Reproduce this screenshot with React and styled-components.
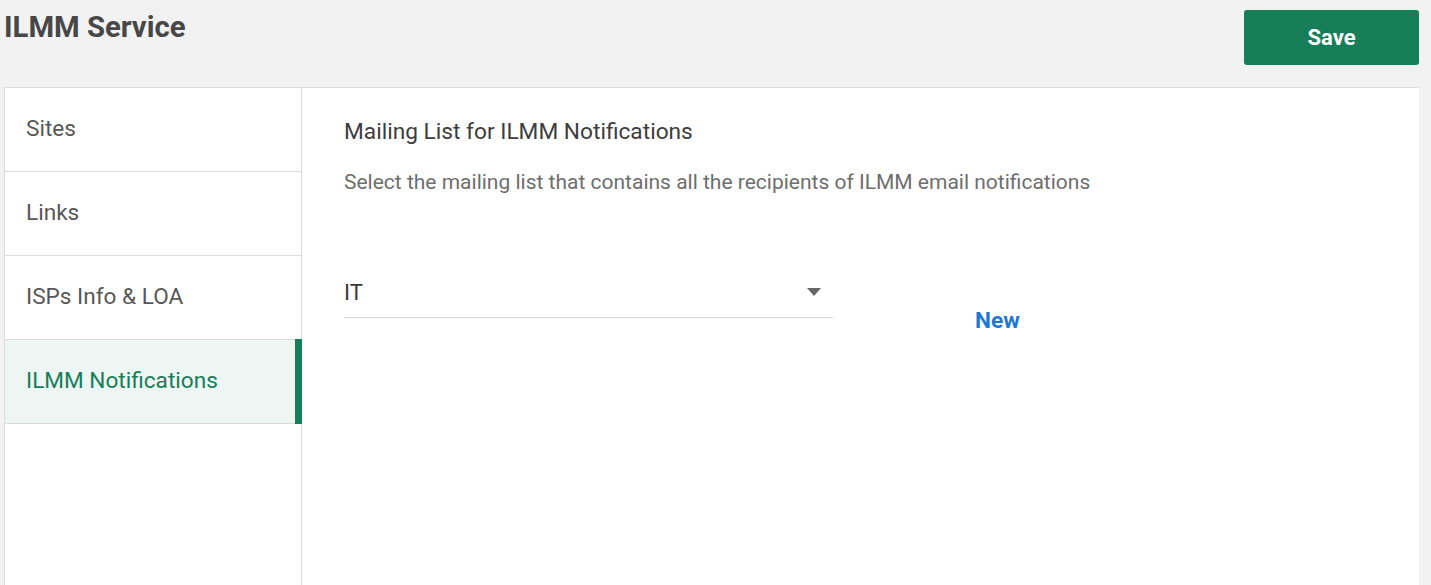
import React, { useState } from "react"
import styled, { createGlobalStyle } from "styled-components"

const GREEN = "#177e5a"

const GlobalStyle = createGlobalStyle`
	html, body {
		margin: 0;
		padding: 0;
		background: #f2f2f2;
		font-family: Roboto, "Liberation Sans", sans-serif;
	}
`

const Page = styled.div`
	min-height: 585px;
	display: flex;
	flex-direction: column;
	padding: 0 12px 0 4px;
	box-sizing: border-box;
`

const Header = styled.div`
	display: flex;
	justify-content: space-between;
	align-items: flex-start;
	height: 87px;
`

const Title = styled.h1`
	margin: 8px 0 0;
	font-size: 29.3px;
	line-height: 38px;
	font-weight: 700;
	color: #474747;
`

const SaveButton = styled.button`
	margin-top: 10px;
	width: 175px;
	height: 55px;
	border: none;
	border-radius: 3px;
	background: ${ GREEN };
	color: #fff;
	font-family: inherit;
	font-size: 22px;
	font-weight: 700;
	cursor: pointer;
`

const Panel = styled.div`
	flex: 1;
	display: flex;
	background: #fff;
	border-top: 1px solid #dcdcdc;
	border-left: 1px solid #dcdcdc;
`

const Sidebar = styled.nav`
	width: 296px;
	display: flex;
	flex-direction: column;
	border-right: 1px solid #dcdcdc;
`

const NavItem = styled.div`
	position: relative;
	height: 84px;
	box-sizing: border-box;
	display: flex;
	align-items: center;
	padding: 0 0 3px 21px;
	border-bottom: 1px solid #dcdcdc;
	font-size: 22.6px;
	color: ${ p => p.$active ? GREEN : "#585858" };
	background: ${ p => p.$active ? "#eef6f3" : "#fff" };
	cursor: pointer;

	&::after {
		content: "";
		display: ${ p => p.$active ? "block" : "none" };
		position: absolute;
		top: -1px;
		bottom: -1px;
		right: -1px;
		width: 7px;
		background: ${ GREEN };
	}
`

const Content = styled.div`
	flex: 1;
	padding: 30px 42px;
`

const Heading = styled.h2`
	margin: 0;
	font-size: 22.7px;
	line-height: 28px;
	font-weight: 400;
	color: #3d3d3d;
`

const Description = styled.p`
	margin: 23px 0 0;
	font-size: 21px;
	line-height: 26px;
	color: #6e6e6e;
`

const FieldRow = styled.div`
	display: flex;
	align-items: flex-start;
	gap: 142px;
	margin-top: 78px;
`

const Select = styled.div`
	width: 489px;
	height: 45px;
	box-sizing: border-box;
	display: flex;
	align-items: center;
	justify-content: space-between;
	padding: 0 12px 6px 0;
	border-bottom: 1px solid #d6d6d6;
	font-size: 22px;
	color: #3a3a3a;
	cursor: pointer;
`

const Caret = styled.span`
	width: 0;
	height: 0;
	border-left: 7.5px solid transparent;
	border-right: 7.5px solid transparent;
	border-top: 8px solid #666;
`

const NewLink = styled.a`
	margin-top: 35px;
	font-size: 22.6px;
	line-height: 26px;
	font-weight: 700;
	color: #1f78d6;
	cursor: pointer;
`

const ITEMS = [ "Sites", "Links", "ISPs Info & LOA", "ILMM Notifications" ]

export default function App() {
	const [ active, setActive ] = useState("ILMM Notifications")

	return (
		<>
			<GlobalStyle />
			<Page>
				<Header>
					<Title>ILMM Service</Title>
					<SaveButton>Save</SaveButton>
				</Header>

				<Panel>
					<Sidebar>
						{ ITEMS.map(item => (
							<NavItem
								key={ item }
								$active={ item === active }
								onClick={ () => setActive(item) }
							>
								{ item }
							</NavItem>
						)) }
					</Sidebar>

					<Content>
						<Heading>Mailing List for ILMM Notifications</Heading>
						<Description>
							Select the mailing list that contains all the recipients of ILMM email notifications
						</Description>
						<FieldRow>
							<Select>
								<span>IT</span>
								<Caret />
							</Select>
							<NewLink>New</NewLink>
						</FieldRow>
					</Content>
				</Panel>
			</Page>
		</>
	)
}
